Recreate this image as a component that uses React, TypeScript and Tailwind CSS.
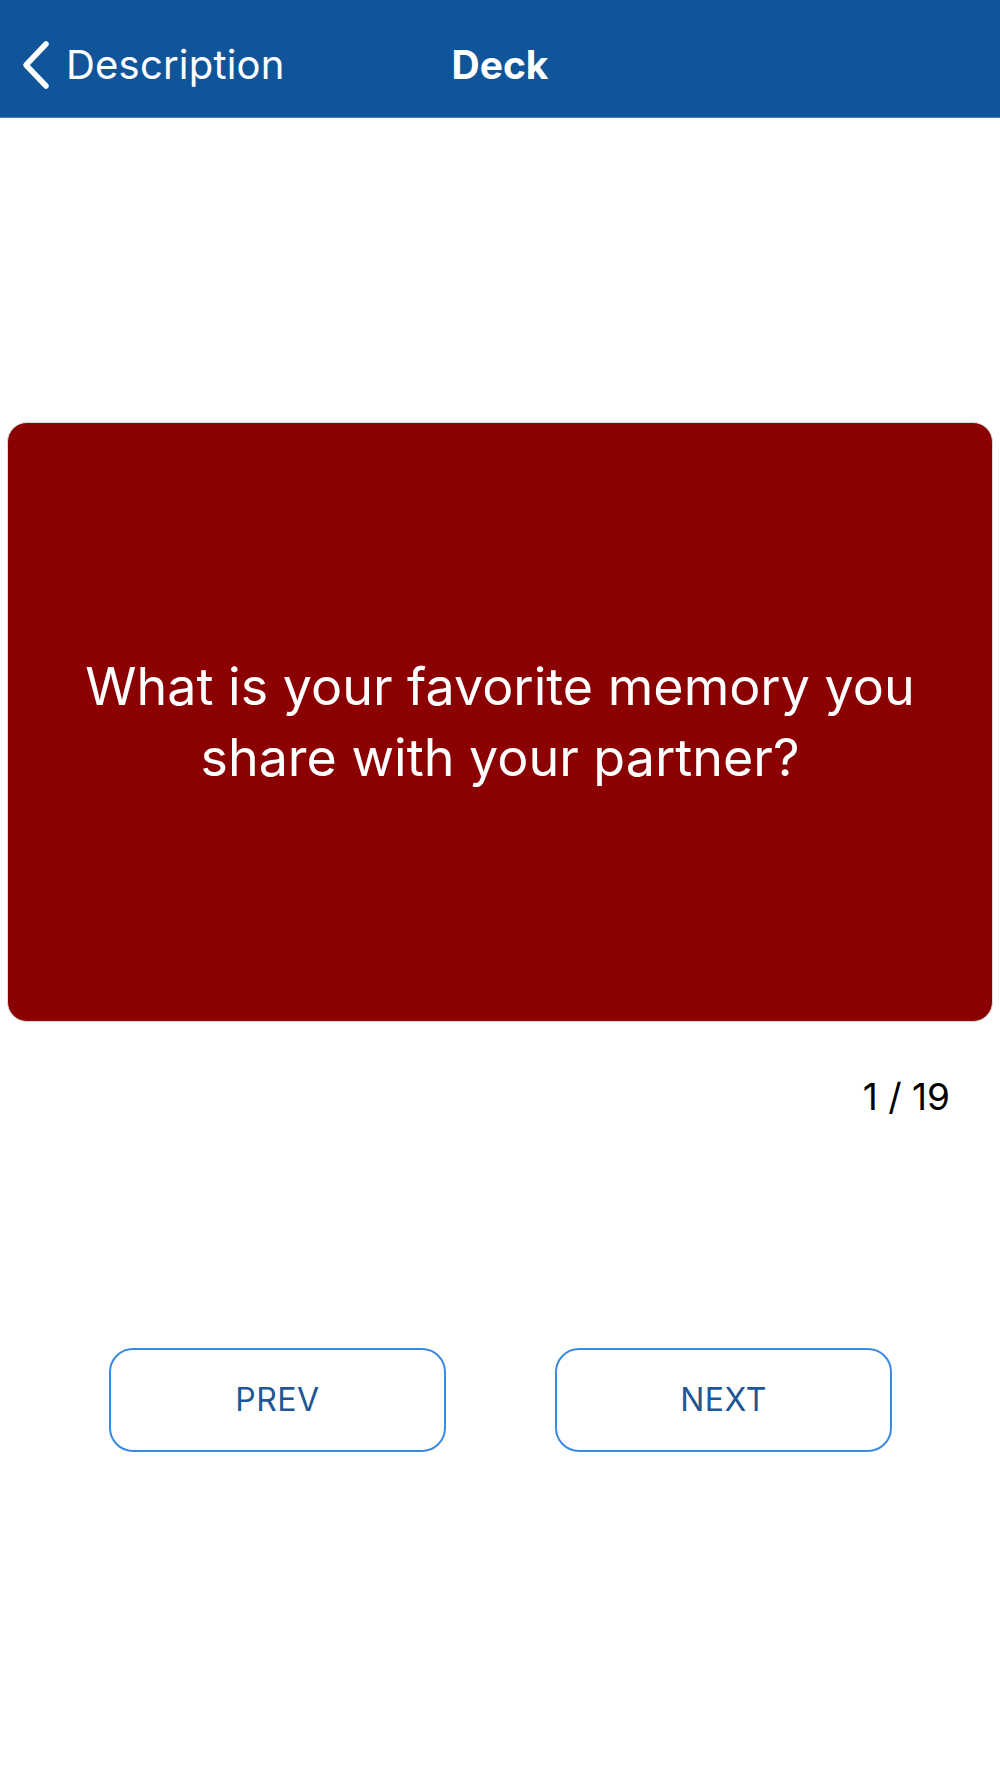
import React from 'react';

const font = { fontFamily: 'Inter, "Noto Sans", sans-serif' };

const App: React.FC = () => {
  return (
    <div className="w-[1000px] h-[1778px] bg-white flex flex-col" style={font}>
      {/* Nav bar */}
      <div className="h-[118px] pt-[12px] bg-[#10549a] grid grid-cols-[1fr_auto_1fr] items-center border-b border-[#4a7fb8]">
        <div className="flex items-center pl-[20px] gap-[14px] text-white">
          <svg width="32" height="50" viewBox="0 0 32 50" fill="none">
            <polyline points="26,4 6,25 26,46" stroke="white" strokeWidth="5.5" strokeLinecap="round" strokeLinejoin="round" />
          </svg>
          <span className="text-[40px] leading-none tracking-[0.2px]">Description</span>
        </div>
        <div className="text-white text-[39px] font-bold leading-none">Deck</div>
        <div />
      </div>

      {/* Card */}
      <div className="mt-[304px] mx-[7px] h-[600px] bg-[#8b0000] rounded-[20px] border border-[#dcdcdc] flex items-center justify-center px-[50px]">
        <p className="text-white text-[52px] leading-[71px] text-center">
          What is your favorite memory you share with your partner?
        </p>
      </div>

      {/* Counter */}
      <div className="flex justify-end pr-[50px] mt-[52px]">
        <span className="text-black text-[37px] leading-[46px]">1 / 19</span>
      </div>

      {/* Buttons */}
      <div className="flex justify-between pl-[109px] pr-[108px] mt-[228px]">
        <button className="w-[337px] h-[104px] rounded-[24px] border-2 border-[#3a8be0] text-[#1f5796] text-[32px] tracking-[0.5px]">
          PREV
        </button>
        <button className="w-[337px] h-[104px] rounded-[24px] border-2 border-[#3a8be0] text-[#1f5796] text-[32px] tracking-[0.5px]">
          NEXT
        </button>
      </div>
    </div>
  );
};

export default App;
